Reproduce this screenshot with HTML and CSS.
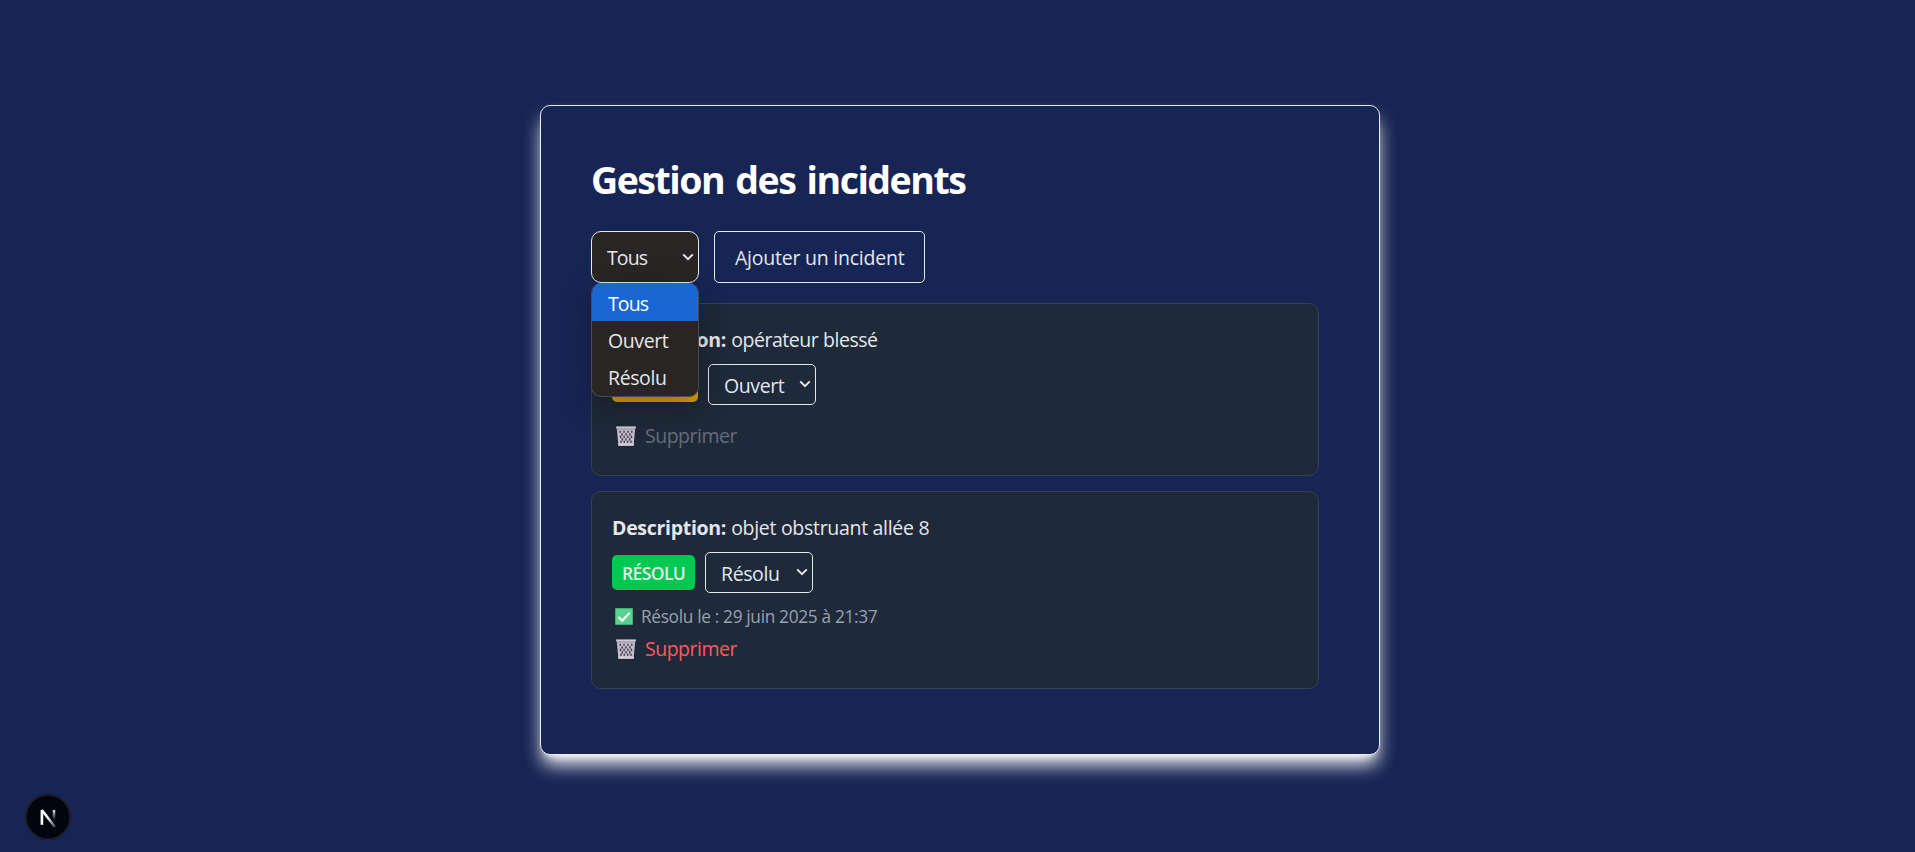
FILE: index.html
```html
<!DOCTYPE html>
<html lang="fr">
<head>
<meta charset="utf-8">
<title>Gestion des incidents</title>
<link rel="stylesheet" href="styles.css">
</head>
<body>
<svg class="defs" width="0" height="0" aria-hidden="true">
  <symbol id="chevron" viewBox="0 0 12 8"><path d="M1.2 1.4 6 6.2l4.8-4.8" fill="none" stroke="currentColor" stroke-width="2"/></symbol>
  <symbol id="trash" viewBox="0 0 20 20">
    <path d="M.8 2h18.4l-1.6 17.4H2.4z" fill="#c4bdcd"/>
    <g stroke="#444052" stroke-width="1.5" stroke-linecap="round">
      <path d="M4.2 5.2v1M8 5.2v1M12 5.2v1M15.8 5.2v1M6.1 7.7v1.2M10 7.7v1.2M13.9 7.7v1.2M4.6 10.2v1.2M8.1 10.2v1.2M11.9 10.2v1.2M15.4 10.2v1.2M6.3 12.8V14M10 12.8V14M13.7 12.8V14M5 15.3v1M8.3 15.3v1M11.7 15.3v1M15 15.3v1"/>
    </g>
    <path d="M.2.4h19.6v2.2H.2z" fill="#cfc8d7"/>
    <path d="M.8 2.6h18.4v.8H.8z" fill="#8f879b"/>
    <path d="M2.2 17.6h15.6v2.2H2.2z" fill="#d3ccda"/>
  </symbol>
</svg>
<main class="panel">
  <h1 class="title">Gestion des incidents</h1>
  <div class="toolbar">
    <div class="filter">
      <div class="select select-filter"><span class="tous">Tous</span><svg class="chevron"><use href="#chevron"/></svg></div>
      <ul class="menu">
        <li class="option active"><span class="tous">Tous</span></li>
        <li class="option"><span class="ouvert">Ouvert</span></li>
        <li class="option"><span class="resolu">Résolu</span></li>
      </ul>
    </div>
    <button class="add">Ajouter un incident</button>
  </div>
  <ul class="incidents">
    <li class="incident">
      <p class="description"><strong>Description:</strong> <span class="desc-open">opérateur blessé</span></p>
      <div class="status">
        <span class="badge badge-open">OUVERT</span>
        <div class="select"><span class="ouvert">Ouvert</span><svg class="chevron"><use href="#chevron"/></svg></div>
      </div>
      <div class="delete disabled"><svg class="trash"><use href="#trash"/></svg><span>Supprimer</span></div>
    </li>
    <li class="incident">
      <p class="description"><strong>Description:</strong> <span class="desc-done">objet obstruant allée 8</span></p>
      <div class="status">
        <span class="badge badge-done">RÉSOLU</span>
        <div class="select"><span class="resolu">Résolu</span><svg class="chevron"><use href="#chevron"/></svg></div>
      </div>
      <div class="resolved"><svg class="check" viewBox="0 0 18 17"><rect width="18" height="17" rx="1" fill="#3fae74"/><rect x="1" y="1" width="16" height="15" fill="#56d48c"/><path d="m3.5 9 3.7 3.7 7.5-8" fill="none" stroke="#fff" stroke-width="2.1"/></svg><span>Résolu le : 29 juin 2025 à 21:37</span></div>
      <div class="delete again"><svg class="trash"><use href="#trash"/></svg><span>Supprimer</span></div>
    </li>
  </ul>
</main>
<svg class="devtools" viewBox="0 0 48 48">
  <defs><linearGradient id="fade" x1="0" y1="16" x2="0" y2="27" gradientUnits="userSpaceOnUse"><stop stop-color="#fff"/><stop offset="1" stop-color="#fff" stop-opacity="0"/></linearGradient>
  <linearGradient id="diag" x1="25" y1="24" x2="32" y2="34" gradientUnits="userSpaceOnUse"><stop stop-color="#fff"/><stop offset="1" stop-color="#fff" stop-opacity=".2"/></linearGradient></defs>
  <circle cx="24" cy="24" r="23.5" fill="#1b1e2b"/>
  <circle cx="24" cy="24" r="21.3" fill="#02040f"/>
  <path d="M17.9 31.8V17" stroke="#fff" stroke-width="2.6"/>
  <path d="m17.8 17 13.2 17" stroke="url(#diag)" stroke-width="2.5"/>
  <path d="M30 17v10.5" stroke="url(#fade)" stroke-width="2.5"/>
</svg>
</body>
</html>
```
FILE: styles.css
```css
* { box-sizing: border-box; }
body {
  margin: 0;
  height: 852px;
  overflow: hidden;
  padding: 105px 0 0 540px;
  background: #172554;
  color: #e5e7eb;
  font: 19.5px/30px "Open Sans", "Noto Sans", sans-serif;
}
ul { list-style: none; margin: 0; padding: 0; }
.defs { position: absolute; }
.panel {
  width: 840px;
  height: 650px;
  padding: 49px 60px 0 50px;
  border: 1px solid #e9eaf2;
  border-radius: 10px;
  background: #172554;
  box-shadow: 0 12.5px 18.75px -3.75px #fff, 0 5px 7.5px -5px #fff;
}
.title {
  margin: 0 0 26px;
  color: #fff;
  font-size: 37.5px;
  line-height: 50px;
  font-weight: 700;
  letter-spacing: -1.5px;
  word-spacing: 3px;
  white-space: nowrap;
}
.toolbar { display: flex; gap: 15px; height: 52px; }
.filter { position: relative; }
.select {
  display: flex;
  align-items: center;
  justify-content: space-between;
  width: 108px;
  height: 41px;
  padding: 2px 4px 0 15px;
  border: 1px solid #e5e7eb;
  border-radius: 5px;
}
.select-filter { height: 52px; border-radius: 10px; background: #292524; }
.chevron { width: 12px; height: 8px; margin-top: -3px; }
.tous { letter-spacing: -.9px; }
.ouvert, .resolu { letter-spacing: -.4px; }
.menu {
  position: absolute;
  top: 52px;
  left: 0;
  width: 108px;
  height: 114px;
  overflow: hidden;
  border: 1px solid #4b4a4c;
  border-top: 0;
  border-radius: 10px;
  background: #292524;
  box-shadow: 0 10px 30px rgba(0, 0, 0, .3);
}
.option { height: 37px; padding: 5px 0 0 16px; line-height: 30px; }
.option.active { height: 38px; padding-top: 6px; background: #1967d2; color: #fff; }
.add {
  width: 211px;
  height: 52px;
  padding: 2px 0 0 20px;
  border: 1px solid #e5e7eb;
  border-radius: 5px;
  background: none;
  color: inherit;
  font: inherit;
  letter-spacing: -.23px;
  text-align: left;
}
.incidents { display: grid; gap: 15px; margin-top: 20px; }
.incident {
  width: 728px;
  padding: 21px 20px 24px;
  border: 1px solid #364153;
  border-radius: 10px;
  background: #1e2939;
}
.description { margin: 0; white-space: nowrap; }
.description strong { letter-spacing: -.3px; }
.desc-open { letter-spacing: -.45px; }
.desc-done { letter-spacing: -.3px; }
.status { display: flex; align-items: center; gap: 10px; margin-top: 9px; }
.badge {
  width: 83px;
  height: 35px;
  padding-left: 10px;
  border-radius: 5px;
  font-size: 17.5px;
  font-weight: 600;
  line-height: 36px;
  letter-spacing: -.6px;
}
.badge-open { width: 86px; background: #dca404; }
.badge-done { background: #00c951; }
.delete { display: flex; margin-top: 16px; color: #ff5a5f; letter-spacing: -.5px; }
.delete.again { margin-top: 5px; }
.delete.disabled { color: #646c7b; }
.trash { width: 20px; height: 20px; margin: 5px 9px 0 4px; }
.resolved { display: flex; margin-top: 11px; color: #99a1af; font-size: 17.3px; line-height: 25px; letter-spacing: -.33px; }
.check { width: 18px; height: 17px; margin: 4px 8px 0 3px; }
.devtools { position: absolute; left: 23.5px; top: 792.5px; width: 48px; height: 48px; }
```
